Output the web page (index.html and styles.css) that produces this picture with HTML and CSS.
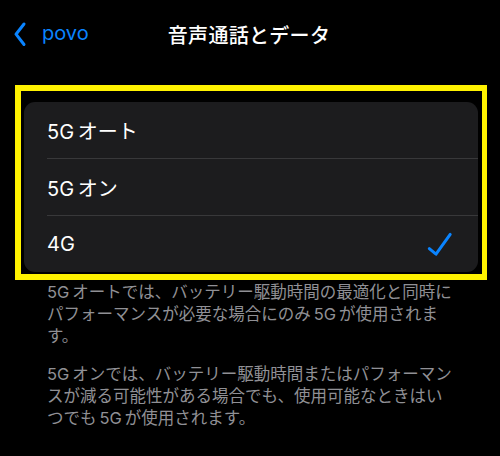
FILE: index.html
```html
<!DOCTYPE html>
<html lang="ja">
<head>
<meta charset="utf-8">
<title>音声通話とデータ</title>
<link rel="stylesheet" href="styles.css">
</head>
<body>
<header class="nav">
  <a class="back">
    <svg class="chev" width="12" height="24" viewBox="0 0 12 24"><path d="M10 2 L2 12.2 L10 22.5" fill="none" stroke="#0a84ff" stroke-width="3" stroke-linecap="round" stroke-linejoin="round"/></svg>
    <span>povo</span>
  </a>
  <h1 class="title">音声通話とデータ</h1>
  <div></div>
</header>

<section class="highlight">
  <div class="card">
    <div class="row"><span>5G&#8201;オート</span></div>
    <div class="row"><span>5G&#8201;オン</span></div>
    <div class="row"><span>4G</span>
      <svg class="check" width="26" height="26" viewBox="0 0 26 26"><path d="M3.3 17.6 L10 23.2 L24.2 3.4" fill="none" stroke="#0a84ff" stroke-width="3" stroke-linecap="round" stroke-linejoin="round"/></svg>
    </div>
  </div>
</section>

<div class="notes">
  <p>5G&#8201;オートでは、バッテリー駆動時間の最適化と同時に<br>パフォーマンスが必要な場合にのみ&#8201;5G&#8201;が使用されま<br>す。</p>
  <p>5G&#8201;オンでは、バッテリー駆動時間またはパフォーマン<br>スが減る可能性がある場合でも、使用可能なときはい<br>つでも&#8201;5G&#8201;が使用されます。</p>
</div>
</body>
</html>
```

FILE: styles.css
```css
html, body {
  margin: 0;
  padding: 0;
  background: #000;
}
body {
  width: 500px;
  height: 456px;
  overflow: hidden;
  font-family: "Inter", "Noto Sans CJK JP", sans-serif;
  color: #fff;
}
.nav {
  height: 68px;
  display: grid;
  grid-template-columns: 1fr auto 1fr;
  align-items: center;
}
.back {
  display: flex;
  align-items: center;
  padding-left: 14px;
  color: #0a84ff;
  font-size: 20px;
}
.back span {
  margin-left: 16px;
  margin-top: -2px;
}
.chev {
  display: block;
  overflow: visible;
}
.title {
  margin: 0;
  font-size: 20px;
  font-weight: 500;
  letter-spacing: 0.3px;
  color: #fff;
  padding-right: 2px;
}
.highlight {
  margin: 17px 13px 0 15px;
  border: 6px solid #fff200;
  border-right-width: 5px;
  padding: 11px 4px 2px 3px;
}
.card {
  background: #1c1c1e;
  border-radius: 11px;
  overflow: hidden;
}
.row {
  height: 56px;
  margin-left: 23px;
  padding-right: 26px;
  display: flex;
  align-items: center;
  justify-content: space-between;
  font-size: 20px;
  color: #fff;
  border-bottom: 1px solid #38383a;
}
.row:last-child {
  border-bottom: none;
}
.check {
  display: block;
  overflow: visible;
}
.notes {
  padding: 1px 10px 0 47px;
  color: #909095;
  font-size: 16.5px;
  line-height: 22px;
}
.notes p {
  margin: 0 0 16px 0;
  white-space: nowrap;
}
```
